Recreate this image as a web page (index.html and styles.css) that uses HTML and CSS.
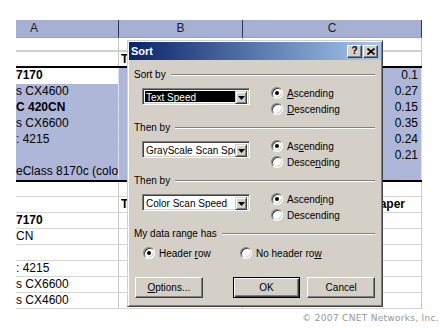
FILE: index.html
```html
<!DOCTYPE html>
<html>
<head>
<meta charset="utf-8">
<link rel="stylesheet" href="styles.css">
</head>
<body>
<div class="sheet">
  <div class="row hdr"><div class="c ca">A</div><div class="c cb">B</div><div class="c cc">C</div></div>
  <div class="row r1"><div class="c ca"></div><div class="c cb"></div><div class="c cc"></div></div>
  <div class="row r2"><div class="c ca"></div><div class="c cb b">T</div><div class="c cc"></div></div>
  <div class="selblock">
    <div class="row sel"><div class="c ca active b">7170</div><div class="c cb"></div><div class="c cc num">0.1</div></div>
    <div class="row sel"><div class="c ca">s CX4600</div><div class="c cb"></div><div class="c cc num">0.27</div></div>
    <div class="row sel"><div class="c ca b">C 420CN</div><div class="c cb"></div><div class="c cc num">0.15</div></div>
    <div class="row sel"><div class="c ca">s CX6600</div><div class="c cb"></div><div class="c cc num">0.35</div></div>
    <div class="row sel"><div class="c ca">: 4215</div><div class="c cb"></div><div class="c cc num">0.24</div></div>
    <div class="row sel"><div class="c ca"></div><div class="c cb"></div><div class="c cc num">0.21</div></div>
    <div class="row sel"><div class="c ca">eClass 8170c (color)</div><div class="c cb"></div><div class="c cc num"></div></div>
  </div>
  <div class="row r10"><div class="c ca"></div><div class="c cb"></div><div class="c cc"></div></div>
  <div class="row"><div class="c ca"></div><div class="c cb b">T</div><div class="c cc b head">aper</div></div>
  <div class="row"><div class="c ca b">7170</div><div class="c cb"></div><div class="c cc"></div></div>
  <div class="row"><div class="c ca">CN</div><div class="c cb"></div><div class="c cc"></div></div>
  <div class="row"><div class="c ca"></div><div class="c cb"></div><div class="c cc"></div></div>
  <div class="row"><div class="c ca">: 4215</div><div class="c cb"></div><div class="c cc"></div></div>
  <div class="row"><div class="c ca">s CX6600</div><div class="c cb"></div><div class="c cc"></div></div>
  <div class="row"><div class="c ca">s CX4600</div><div class="c cb"></div><div class="c cc"></div></div>
</div>

<div class="footer">© 2007 CNET Networks, Inc.</div>

<div class="dialog">
  <div class="titlebar">
    <span class="title">Sort</span>
    <span class="tbtn q">?</span>
    <span class="tbtn"><svg width="8" height="7" viewBox="0 0 8 7"><path d="M0.5 0.5L7.5 6.5M7.5 0.5L0.5 6.5" stroke="#000" stroke-width="1.6"/></svg></span>
  </div>
  <div class="dbody">
    <div class="legend first"><span>Sort by</span><span class="line"></span></div>
    <div class="grow">
      <div class="dd focus"><span class="field">Text Speed</span><span class="arrow"><svg width="7" height="4" viewBox="0 0 7 4"><path d="M0 0H7L3.5 4Z" fill="#000"/></svg></span></div>
      <div class="radios">
        <div class="ropt"><span class="radio on"></span><span><u>A</u>scending</span></div>
        <div class="ropt"><span class="radio"></span><span><u>D</u>escending</span></div>
      </div>
    </div>
    <div class="legend"><span>Then by</span><span class="line"></span></div>
    <div class="grow">
      <div class="dd"><span class="field">GrayScale Scan Speed</span><span class="arrow"><svg width="7" height="4" viewBox="0 0 7 4"><path d="M0 0H7L3.5 4Z" fill="#000"/></svg></span></div>
      <div class="radios">
        <div class="ropt"><span class="radio on"></span><span>As<u>c</u>ending</span></div>
        <div class="ropt"><span class="radio"></span><span>Desce<u>n</u>ding</span></div>
      </div>
    </div>
    <div class="legend"><span>Then by</span><span class="line"></span></div>
    <div class="grow">
      <div class="dd"><span class="field">Color Scan Speed</span><span class="arrow"><svg width="7" height="4" viewBox="0 0 7 4"><path d="M0 0H7L3.5 4Z" fill="#000"/></svg></span></div>
      <div class="radios">
        <div class="ropt"><span class="radio on"></span><span>Ascend<u>i</u>ng</span></div>
        <div class="ropt"><span class="radio"></span><span>Descendin<u>g</u></span></div>
      </div>
    </div>
    <div class="legend"><span>My data range has</span><span class="line"></span></div>
    <div class="hrow">
      <div class="ropt hdropt"><span class="radio on"></span><span>Header <u>r</u>ow</span></div>
      <div class="ropt"><span class="radio"></span><span>No header ro<u>w</u></span></div>
    </div>
    <div class="brow">
      <span class="btn opt"><span><u>O</u>ptions...</span></span>
      <span class="btn def">OK</span>
      <span class="btn cancel">Cancel</span>
    </div>
  </div>
</div>
</body>
</html>
```

FILE: styles.css
```css
html, body {
  margin: 0;
  padding: 0;
}
body {
  width: 440px;
  height: 330px;
  background: #fff;
  position: relative;
  overflow: hidden;
  font-family: "Liberation Sans", Arial, sans-serif;
}

/* ---------- spreadsheet ---------- */
.sheet {
  margin: 20px 0 0 16px;
  width: 406px;
  font-size: 12px;
  color: #000;
}
.row {
  display: grid;
  grid-template-columns: 103px 124px 179px;
  height: 16px;
}
.c {
  box-sizing: border-box;
  border-right: 1px solid #c6c6c6;
  border-bottom: 1px solid #d4d4d4;
  line-height: 15px;
  white-space: nowrap;
  overflow: hidden;
}
.cb { padding-left: 2px; }
.b { font-weight: bold; }
.num { text-align: right; padding-right: 3px; }
.head { text-align: right; padding-right: 16px; }

.hdr {
  height: 18px;
  background: #a6b0d3;
}
.hdr .c {
  border-right-color: #2a356b;
  border-bottom: 1px solid #95a0c6;
  line-height: 17px;
  text-align: center;
  color: #1c1c1c;
  padding: 0;
}
.hdr .ca { text-align: left; padding-left: 14px; }

.r1 { height: 14px; }
.r1 .c { border-bottom: 2px solid #cfcfcf; line-height: 12px; }
.r2 { height: 14px; }
.r2 .c { border-bottom: none; line-height: 14px; }

.selblock {
  border-top: 2px solid #000;
  border-bottom: 2px solid #000;
  background: #aeb7d8;
}
.sel .c {
  border-bottom-color: transparent;
  border-right-color: #dde1ef;
}
.sel .active { background: #fff; }

.r10 { height: 15px; }
.r10 .c { line-height: 14px; }

/* ---------- footer ---------- */
.footer {
  margin-top: 4px;
  padding-right: 1px;
  text-align: right;
  font-family: "DejaVu Sans", sans-serif;
  font-size: 9px;
  letter-spacing: 0.3px;
  line-height: 11px;
  color: #969696;
}

/* ---------- dialog ---------- */
.dialog {
  position: absolute;
  left: 127px;
  top: 40px;
  width: 256px;
  height: 267px;
  box-sizing: border-box;
  padding: 1px;
  background: #d4d0c8;
  border: 1px solid;
  border-color: #d4d0c8 #404040 #404040 #d4d0c8;
  box-shadow: inset 1px 1px 0 #fff, inset -1px -1px 0 #808080;
  font-family: "Liberation Sans", Arial, sans-serif;
  font-size: 10px;
  color: #000;
}
.titlebar {
  height: 18px;
  display: flex;
  align-items: center;
  padding: 0 3px 0 2px;
  background: linear-gradient(to right, #0a246a, #a6caf0);
}
.title {
  flex: 1;
  color: #fff;
  font-weight: bold;
  font-size: 11px;
}
.tbtn {
  width: 15px;
  height: 13px;
  box-sizing: border-box;
  background: #d4d0c8;
  border: 1px solid;
  border-color: #fff #404040 #404040 #fff;
  box-shadow: inset -1px -1px 0 #808080;
  display: flex;
  align-items: center;
  justify-content: center;
  font-weight: bold;
  font-size: 10px;
  line-height: 10px;
}
.tbtn + .tbtn { margin-left: 1px; }
.tbtn.q { padding-bottom: 1px; }

.dbody {
  padding: 0 6px 0 5px;
  display: flex;
  flex-direction: column;
}
.legend {
  display: flex;
  align-items: center;
  height: 12px;
  line-height: 12px;
  margin-top: 5px;
}
.legend.first { margin-top: 9px; }
.legend .line {
  flex: 1;
  margin-left: 5px;
  border-top: 1px solid #808080;
  border-bottom: 1px solid #fff;
}
.grow {
  display: flex;
  height: 32px;
  margin-top: 4px;
}
.dd {
  width: 108px;
  height: 17px;
  margin: 3px 0 0 8px;
  box-sizing: border-box;
  padding: 2px;
  display: flex;
  background: #fff;
  border: 1px solid;
  border-color: #808080 #fff #fff #808080;
  box-shadow: inset 1px 1px 0 #404040, inset -1px -1px 0 #d4d0c8;
}
.field {
  flex: 1;
  overflow: hidden;
  white-space: nowrap;
  line-height: 13px;
  padding-left: 1px;
}
.dd.focus .field {
  background: #000;
  color: #fff;
}
.arrow {
  width: 12px;
  height: 13px;
  box-sizing: border-box;
  background: #d4d0c8;
  border: 1px solid;
  border-color: #d4d0c8 #404040 #404040 #d4d0c8;
  box-shadow: inset 1px 1px 0 #fff, inset -1px -1px 0 #808080;
  display: flex;
  align-items: center;
  justify-content: center;
}
.radios {
  margin-left: 21px;
  display: flex;
  flex-direction: column;
}
.ropt {
  height: 16px;
  display: flex;
  align-items: center;
  gap: 4px;
}
.radio {
  width: 12px;
  height: 12px;
  box-sizing: border-box;
  border-radius: 50%;
  background: #fff;
  border: 1px solid;
  border-color: #808080 #fff #fff #808080;
  box-shadow: inset 1px 1px 0 #404040, inset -1px -1px 0 #d4d0c8;
  display: flex;
  align-items: center;
  justify-content: center;
}
.radio.on::after {
  content: "";
  width: 4px;
  height: 4px;
  border-radius: 50%;
  background: #000;
}
.hrow {
  display: flex;
  margin-top: 5px;
  padding-left: 9px;
}
.hdropt { width: 97px; }

.brow {
  display: flex;
  margin-top: 16px;
  padding-left: 1px;
}
.btn {
  width: 68px;
  height: 21px;
  box-sizing: border-box;
  background: #d4d0c8;
  border: 1px solid;
  border-color: #fff #404040 #404040 #fff;
  box-shadow: inset -1px -1px 0 #808080;
  display: flex;
  align-items: center;
  justify-content: center;
}
.btn.def {
  margin-left: 30px;
  border-color: #000;
  box-shadow: inset 1px 1px 0 #fff, inset -1px -1px 0 #404040, inset -2px -2px 0 #808080;
}
.btn.cancel { margin-left: 7px; }
```
